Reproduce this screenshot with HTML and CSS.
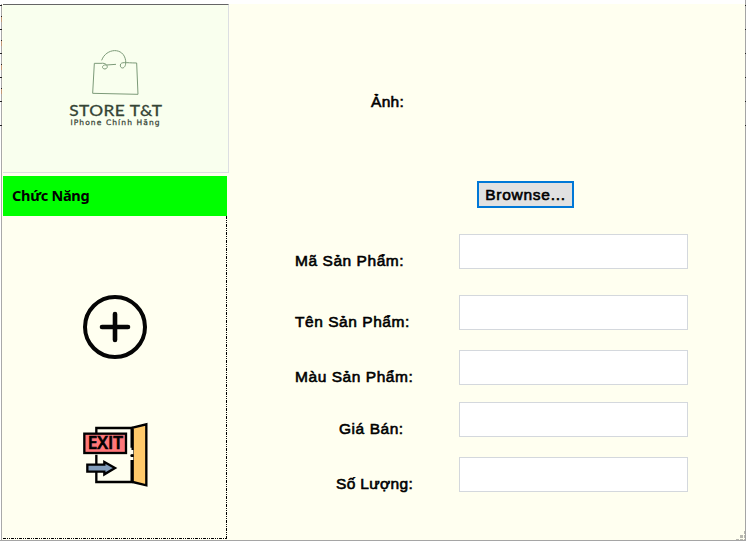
FILE: index.html
```html
<!DOCTYPE html>
<html lang="vi">
<head>
<meta charset="utf-8">
<title>Store T&amp;T</title>
<link rel="stylesheet" href="styles.css">
</head>
<body>
<div class="window">
  <aside class="sidebar">
    <div class="brand">
      <svg class="bag" viewBox="0 0 140 140" width="46.67" height="46.67" fill="none" stroke="#7b9a77" stroke-width="3">
        <path d="M29 34C42 -3 95 -7 101 35C104 61 84 62 85 48C87 37 101 42 134 42L138 136L2 133L7 43H27C47 40 51 59 39 60C27 60 30 45 44 48L72 46"/>
      </svg>
      <div class="brand-name">STORE T&amp;T</div>
      <div class="brand-tag">IPhone Chính Hãng</div>
    </div>
    <h2 class="menu-title">Chức Năng</h2>
    <nav class="menu">
      <svg width="66" height="66" viewBox="0 0 66 66" fill="none" stroke="#050505">
        <circle cx="33" cy="33" r="30" stroke-width="4"/>
        <path d="M33 20V46M20 33H46" stroke-width="4.6" stroke-linecap="round"/>
      </svg>
      <svg class="exit" width="66" height="66" viewBox="0 0 198 198" stroke="#000" stroke-width="7">
        <path d="M40 45V18H146V77M146 114V180H40V148M40 126V98" fill="none"/>
        <path d="M149 17L190 7V190L149 180Z" fill="#ffca6b"/>
        <path d="M142 84H151V97H142ZM142 105H151V114H142Z" fill="#fffff0" stroke="none"/>
        <circle cx="146" cy="101" r="4" fill="#000" stroke="none"/>
        <rect x="4" y="35" width="125" height="58" fill="#ff7779"/>
        <text class="exit-text" x="14" y="82" textLength="106" lengthAdjust="spacingAndGlyphs">EXIT</text>
        <path d="M13 128H64V120L96 138L64 157V149H13Z" fill="#829dbb"/>
      </svg>
    </nav>
  </aside>
  <main class="form">
    <div class="photo-row"><label class="label l-photo">Ảnh:</label></div>
    <button class="browse" type="button"><span>Brownse...</span></button>
    <div class="field"><label class="label l-code" for="a">Mã Sản Phẩm:</label><input id="a"></div>
    <div class="field f-name"><label class="label l-name" for="b">Tên Sản Phẩm:</label><input id="b"></div>
    <div class="field f-color"><label class="label l-color" for="c">Màu Sản Phẩm:</label><input id="c"></div>
    <div class="field f-price"><label class="label l-price" for="d">Giá Bán:</label><input id="d"></div>
    <div class="field f-count"><label class="label l-count" for="e">Số Lượng:</label><input id="e"></div>
  </main>
  <div class="ticks ticks-left"></div>
  <div class="ticks ticks-right"></div>
  <svg class="grip" width="9" height="9" fill="#b8b8b0"><path d="M8 0h1v3h-1zM4 4h3v3h-3zM8 4h1v3h-1zM0 8h3v1h-3zM4 8h3v1h-3zM8 8h1v1h-1z"/></svg>
</div>
</body>
</html>
```
FILE: styles.css
```css
* { box-sizing: border-box; }
body { margin: 0; background: #fff; overflow: hidden; }
.window {
  position: relative;
  display: flex;
  width: 746px;
  height: 541px;
  padding: 4px 0 0 2px;
  border-right: 1px solid #a5a5a5;
  border-bottom: 1px solid #a5a5a5;
  background: linear-gradient(#fff, #fff) 0 0 / 100% 4px no-repeat,
    linear-gradient(#fff, #fff) 0 0 / 1px 100% no-repeat,
    linear-gradient(#a9a9a9, #a9a9a9) 1px 0 / 1px 100% no-repeat, #fffff0;
}
.sidebar { width: 227px; padding-left: 1px; flex: none; }
.brand {
  display: flex;
  flex-direction: column;
  align-items: center;
  height: 169px;
  padding-top: 44px;
  background: #f9ffee;
  border: 1px solid #dcdfe2;
  border-left: 0;
  border-top-color: #656565;
}
.bag { display: block; overflow: visible; }
.brand-name {
  margin-top: 6px;
  font: 14.8px/17px "Lato", sans-serif;
  letter-spacing: .4px;
  transform: scaleX(1.17);
  -webkit-text-stroke: .3px #354435;
  color: #354435;
  white-space: nowrap;
}
.brand-tag {
  font: 7.5px/8px "DejaVu Sans", sans-serif;
  letter-spacing: 1.1px;
  -webkit-text-stroke: .25px #354435;
  color: #354435;
  white-space: nowrap;
}
.menu-title {
  width: 224px;
  height: 40px;
  margin: 3px 0 0;
  padding-left: 9px;
  background: #0f0;
  font: 700 14.5px/39px "Noto Sans", "Open Sans", sans-serif;
  letter-spacing: -.3px;
  color: #000;
}
.menu {
  display: flex;
  flex-direction: column;
  align-items: center;
  gap: 62px;
  width: 224px;
  height: 323px;
  padding-top: 78px;
  background:
    repeating-linear-gradient(#000 0 3px, transparent 3px 4px, #000 4px 5px, transparent 5px 6px, #000 6px 7px, transparent 7px 8px) 100% 0 / 1px 100% no-repeat,
    repeating-linear-gradient(90deg, #000 0 3px, transparent 3px 4px, #000 4px 5px, transparent 5px 6px, #000 6px 7px, transparent 7px 8px) 0 100% / 100% 1px no-repeat;
}
.exit { margin-left: 1px; }
.exit-text { font: 600 53px "Open Sans", sans-serif; fill: #000; stroke: #000; stroke-width: 2px; }
.form { flex: 1; display: flex; flex-direction: column; }
.label {
  flex: none;
  font: 15.5px/18px "Liberation Sans", Arial, sans-serif;
  -webkit-text-stroke: .6px #000;
  color: #000;
  white-space: nowrap;
}
.photo-row { height: 177px; padding: 89px 0 0 142px; }
.browse {
  width: 97px;
  height: 27px;
  margin: 0 0 26px 248px;
  padding: 0;
  border: 2px solid #0078d7;
  background: #e1e1e1;
  font: 15.5px/22px "Liberation Sans", Arial, sans-serif;
  letter-spacing: .75px;
  -webkit-text-stroke: .6px #000;
  color: #000;
}
.field { display: flex; height: 35px; padding-left: 66px; }
.field .label { width: 164px; padding-top: 18px; }
.field input { width: 229px; height: 35px; border: 1px solid #d4d8dd; background: #fff; padding: 0 8px; }
.f-name { margin-top: 26px; }
.f-color { margin-top: 20px; }
.f-price { margin-top: 17px; padding-left: 110px; }
.f-count { margin-top: 20px; padding-left: 107px; }
.f-price .label { width: 120px; }
.f-count .label { width: 123px; }
.l-photo { letter-spacing: .3px; }
.l-code, .l-name, .l-color, .l-price { letter-spacing: .55px; }
.l-count { letter-spacing: .35px; }
.ticks { position: absolute; top: 5px; height: 121px; }
.ticks-left {
  left: 0;
  width: 2px;
  background: repeating-linear-gradient(#222 0 1px, transparent 1px 24px) 0 0 / 100% 121px no-repeat,
    repeating-linear-gradient(transparent 0 11px, #222 11px 12px, #c49a78 12px 17px, transparent 17px 24px) 1px 0 / 100% 96px no-repeat;
}
.ticks-right { right: -1px; width: 1px; background: repeating-linear-gradient(#222 0 1px, transparent 1px 24px); }
.grip { position: absolute; right: 0; bottom: 0; }
```
